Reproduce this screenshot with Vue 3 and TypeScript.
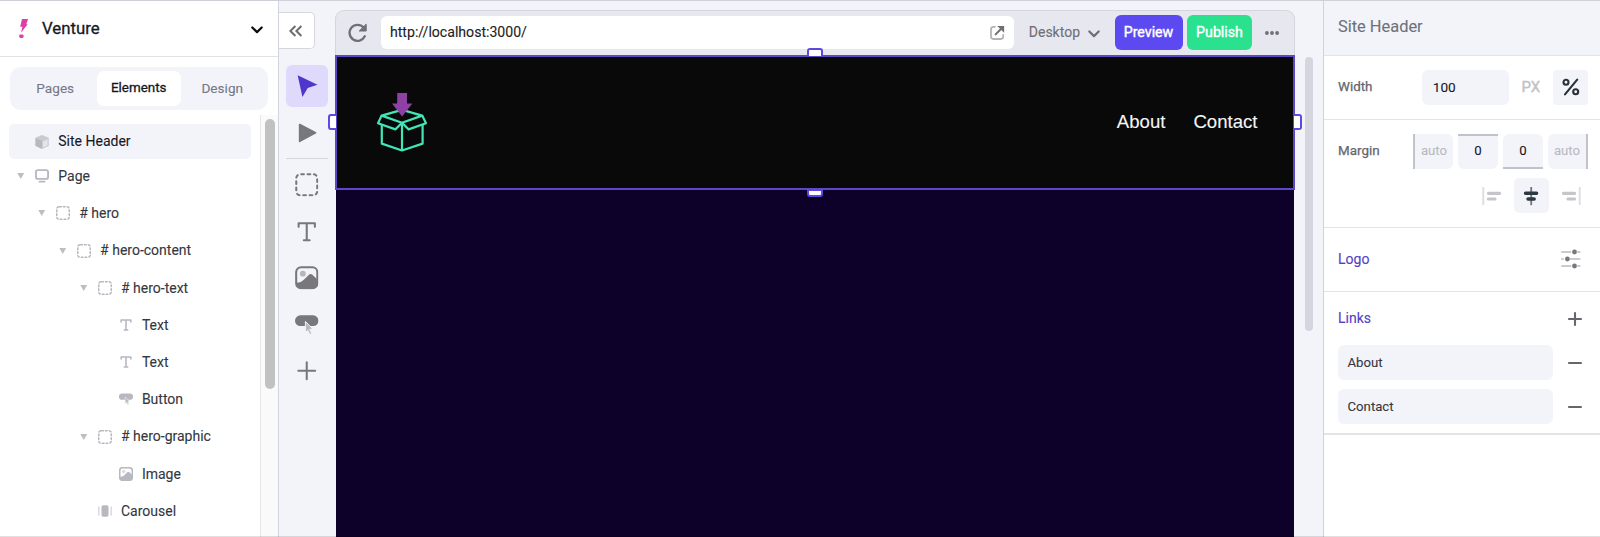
<script setup lang="ts">
import { ref } from 'vue'

interface TreeNode {
  label: string
  icon: string
  depth: number
  open?: boolean
}

const tabs = ['Pages', 'Elements', 'Design']
const activeTab = ref('Elements')

const nodes: TreeNode[] = [
  { label: '# hero', icon: 'box', depth: 1, open: true },
  { label: '# hero-content', icon: 'box', depth: 2, open: true },
  { label: '# hero-text', icon: 'box', depth: 3, open: true },
  { label: 'Text', icon: 'text', depth: 4 },
  { label: 'Text', icon: 'text', depth: 4 },
  { label: 'Button', icon: 'button', depth: 4 },
  { label: '# hero-graphic', icon: 'box', depth: 3, open: true },
  { label: 'Image', icon: 'image', depth: 4 },
  { label: 'Carousel', icon: 'carousel', depth: 3 },
]

const insertTools = ['box', 'text', 'image', 'button', 'plus']

const margins = [
  { side: 'left', value: 'auto' },
  { side: 'top', value: '0' },
  { side: 'bottom', value: '0' },
  { side: 'right', value: 'auto' },
]

const links = ref(['About', 'Contact'])
</script>

<template>
  <div class="app">
    <svg class="defs" aria-hidden="true">
      <symbol id="i-box" viewBox="0 0 24 24">
        <rect class="line" x="1.3" y="1.3" width="21.4" height="21.4" rx="4" fill="none" stroke="currentColor" stroke-linecap="round" stroke-dasharray="2.6 3.6" stroke-dashoffset="-1" pathLength="74.4" />
      </symbol>
      <symbol id="i-text" viewBox="0 0 24 24">
        <path class="line" d="M3.7 7V3.4H20.3V7M12 3.4V20.6M9 20.6H15" fill="none" stroke="currentColor" stroke-linecap="round" stroke-linejoin="round" />
      </symbol>
      <symbol id="i-image" viewBox="0 0 24 24">
        <rect class="line" x="1.2" y="1.2" width="21.6" height="21.6" rx="5" fill="none" stroke="currentColor" />
        <circle cx="8" cy="7.8" r="3" fill="currentColor" opacity=".5" />
        <path d="M1.2 16.8C4 17 6.5 16.5 9 14L14.2 8.9Q16 7.6 17.8 8.9L22.8 13.8V18Q22.8 22.8 18 22.8H6Q1.2 22.8 1.2 18Z" fill="currentColor" />
      </symbol>
      <symbol id="i-button" viewBox="0 0 24 24">
        <rect x="0" y="2.4" width="24" height="11" rx="5.4" fill="currentColor" />
        <path class="pointer" d="M10.6 8.6L18.4 16.3L15.1 16.7L17.1 21L15.1 22L13.1 17.8L10.6 20Z" stroke-width="1" />
      </symbol>
      <symbol id="i-plus" viewBox="0 0 24 24">
        <path class="line" d="M12 3.4V20.6M3.4 12H20.6" fill="none" stroke="currentColor" stroke-linecap="round" />
      </symbol>
      <symbol id="i-carousel" viewBox="0 0 24 24">
        <rect x="6" y="2" width="12" height="20" rx="3" fill="currentColor" />
        <path d="M1.4 5V19M22.6 5V19" stroke="currentColor" stroke-width="2.4" stroke-linecap="round" opacity=".55" />
      </symbol>
      <symbol id="i-page" viewBox="0 0 24 24">
        <rect x="1.6" y="2" width="20.8" height="15" rx="3.4" fill="none" stroke="currentColor" stroke-width="3.2" />
        <path d="M7.6 21.8H16.4" stroke="currentColor" stroke-width="3" stroke-linecap="round" />
      </symbol>
      <symbol id="i-cube" viewBox="0 0 24 24">
        <path d="M12 .5L23 5V18.4L12 23.5L1 18.4V5Z" fill="currentColor" stroke="currentColor" stroke-linejoin="round" opacity=".7" />
        <path d="M1.3 5.4L12 10V23.5L1 18.4Z" fill="currentColor" />
        <path d="M13.4 11L21.6 7.4V17.6L13.4 21.4Z" fill="#f3f4fa" opacity=".65" />
      </symbol>
    </svg>

    <aside class="sidebar">
      <header class="project">
        <svg class="bolt" viewBox="0 0 9 20">
          <path d="M3 0H9L7.3 5.2H8.7L2 13.7L3.5 7.8H1.2Z" fill="#dd3fa4" />
          <rect x=".2" y="15.4" width="4.4" height="3.6" rx="1.4" fill="#dd3fa4" />
        </svg>
        <span class="project-name">Venture</span>
        <svg class="project-caret" viewBox="0 0 12 8"><path d="M1.3 1.5L6 6.1L10.7 1.5" /></svg>
      </header>

      <nav class="tabs">
        <button v-for="t in tabs" :key="t" class="tab" :class="{ on: t === activeTab }" @click="activeTab = t">{{ t }}</button>
      </nav>

      <div class="tree-area">
        <div class="tree">
          <div class="root"><svg class="node-icon"><use href="#i-cube" /></svg><span>Site Header</span></div>
          <div class="node page">
            <svg class="tri" viewBox="0 0 8 7"><path d="M0 0H8L4 7Z" /></svg>
            <svg class="node-icon"><use href="#i-page" /></svg><span>Page</span>
          </div>
          <div v-for="(n, i) in nodes" :key="i" class="node" :class="'d' + n.depth">
            <svg class="tri" :class="{ none: !n.open }" viewBox="0 0 8 7"><path d="M0 0H8L4 7Z" /></svg>
            <svg class="node-icon"><use :href="'#i-' + n.icon" /></svg><span>{{ n.label }}</span>
          </div>
        </div>
        <div class="track"><div class="thumb"></div></div>
      </div>
    </aside>

    <div class="toolbar">
      <button class="collapse">
        <svg viewBox="0 0 14 12"><path d="M6.4 1L1.4 6L6.4 11M12.4 1L7.4 6L12.4 11" /></svg>
      </button>
      <div class="tools">
        <button class="tool active">
          <svg class="tool-icon" viewBox="0 0 24 24"><path d="M2.7 1.2L23 11L13 14.2L7.6 23.4Z" fill="currentColor" /></svg>
        </button>
        <button class="tool">
          <svg class="tool-icon" viewBox="0 0 24 24"><path d="M4.8 3.7L20.9 12L4.8 20.7Z" fill="currentColor" stroke="currentColor" stroke-width="1.8" stroke-linejoin="round" /></svg>
        </button>
        <div class="divider"></div>
        <button v-for="t in insertTools" :key="t" class="tool">
          <svg class="tool-icon"><use :href="'#i-' + t" /></svg>
        </button>
      </div>
    </div>

    <main class="canvas">
      <div class="browser">
        <div class="chrome">
          <svg class="reload" viewBox="0 0 20 20">
            <path d="M16.8 13.3A8 8 0 1 1 15.6 4.6" fill="none" stroke="currentColor" stroke-width="2.3" stroke-linecap="round" />
            <path d="M18.2 1.2V8H11.2Z" fill="currentColor" stroke="currentColor" stroke-linejoin="round" />
          </svg>
          <div class="url">
            <span>http://localhost:3000/</span>
            <svg class="open" viewBox="0 0 15 15">
              <path d="M5 1.8H3.4Q1 1.8 1 4.2V11.6Q1 14 3.4 14H10.8Q13.2 14 13.2 11.6V10" fill="none" stroke="#b4b4b8" stroke-width="1.8" stroke-linecap="round" />
              <path d="M5.6 9.4L12 3" stroke="#6f6f74" stroke-width="2" stroke-linecap="round" />
              <path d="M7.2 .9H14.1V7.8Z" fill="#6f6f74" />
            </svg>
          </div>
          <span class="device">Desktop</span>
          <svg class="device-caret" viewBox="0 0 12 8"><path d="M1.3 1.5L6 6.1L10.7 1.5" /></svg>
          <button class="action preview">Preview</button>
          <button class="action publish">Publish</button>
          <svg class="more" viewBox="0 0 14 4"><circle cx="1.9" cy="2" r="1.9" /><circle cx="7" cy="2" r="1.9" /><circle cx="12.1" cy="2" r="1.9" /></svg>
        </div>
        <div class="site">
          <div class="site-header">
            <svg class="logo" viewBox="0 0 50 59">
              <g fill="none" stroke="#42e6b5" stroke-width="2.2" stroke-linejoin="round">
                <path d="M4.8 32V50.6L25 57.5L45.6 50.6V32" />
                <path d="M25 29.8V57.5" />
                <path d="M4.6 22.6L25 16.9L45.2 22.6L25 29.8Z" />
                <path d="M4.6 22.6L1 30.2L18.4 36.4L25 29.8L31.6 36.4L49 30.2L45.2 22.6" />
              </g>
              <path d="M20.2 0H30V10.4H35.4L25.1 23.6L15 10.4H20.2Z" fill="#8e40a5" />
            </svg>
            <div class="site-nav"><a>About</a><a>Contact</a></div>
            <i class="handle h-top"></i><i class="handle h-bottom"></i>
            <i class="handle h-left"></i><i class="handle h-right"></i>
          </div>
        </div>
      </div>
      <div class="canvas-thumb"></div>
    </main>

    <aside class="inspector">
      <header class="title">Site Header</header>
      <section class="width-section">
        <label>Width</label>
        <div class="field width-field">100</div>
        <span class="unit">PX</span>
        <div class="percent">
          <svg viewBox="0 0 18 18"><g fill="none" stroke="#263238" stroke-width="2.1"><circle cx="4" cy="4.2" r="2.5" /><circle cx="13.7" cy="13.8" r="2.5" /><path d="M15.2 1.6L3 16.4" stroke-linecap="round" /></g></svg>
        </div>
      </section>
      <section class="margin-section">
        <div class="margin-row">
          <label>Margin</label>
          <div v-for="m in margins" :key="m.side" class="margin" :class="[m.side, { muted: m.value === 'auto' }]">{{ m.value }}</div>
        </div>
        <div class="align-row">
          <div class="align"><svg viewBox="0 0 20 20"><path d="M1.3 1V19" stroke="#dfdfe3" stroke-width="2" /><path d="M6.4 7.3H17.6M6.4 13H13" stroke="#c6c6ca" stroke-width="3.2" stroke-linecap="round" /></svg></div>
          <div class="align on"><svg viewBox="0 0 20 20"><path d="M10.2 1V19.2" stroke="#6b757d" stroke-width="1.8" /><path d="M4.5 7.3H15.6M7 13H13.2" stroke="#2d3941" stroke-width="3.4" stroke-linecap="round" /></svg></div>
          <div class="align"><svg viewBox="0 0 20 20"><path d="M18.7 1V19" stroke="#dfdfe3" stroke-width="2" /><path d="M2.4 7.3H13.6M7 13H13.6" stroke="#c6c6ca" stroke-width="3.2" stroke-linecap="round" /></svg></div>
        </div>
      </section>
      <section class="logo-section">
        <span class="accent">Logo</span>
        <svg class="sliders" viewBox="0 0 20 20">
          <path d="M1 3H9.6M17 3H18.6M1 10H2M9.4 10H18.6M1 17H9.6M17 17H18.6" stroke="#cbcbcf" stroke-width="2" stroke-linecap="round" />
          <g fill="#77777d"><circle cx="13.5" cy="3" r="2.4" /><circle cx="6.4" cy="10" r="2.4" /><circle cx="13.5" cy="17" r="2.4" /></g>
        </svg>
      </section>
      <section class="links-section">
        <div class="links-head">
          <span class="accent">Links</span>
          <svg class="sign" viewBox="0 0 14 14"><path d="M7 1V13M1 7H13" /></svg>
        </div>
        <div v-for="l in links" :key="l" class="link-row">
          <div class="field">{{ l }}</div>
          <svg class="sign" viewBox="0 0 14 14"><path d="M1 7H13" /></svg>
        </div>
      </section>
    </aside>
  </div>
</template>

<style>
body { margin: 0; overflow: hidden; }
</style>

<style scoped>
.app {
  position: relative; display: flex; box-sizing: border-box; width: 1600px; height: 537px; overflow: hidden;
  border-top: 1px solid #cfcfd7;
  background: #f3f4fa; color: #343740;
  font: 14px/20px Roboto, "Liberation Sans", sans-serif;
  -webkit-text-stroke: .1px currentColor;
}
.app::after { content: ""; position: absolute; left: 0; right: 0; bottom: 0; height: 1px; background: rgba(0, 0, 0, .12); }
.app * { box-sizing: border-box; }
.app svg { display: block; flex: none; overflow: visible; }
.app .defs { position: absolute; width: 0; height: 0; }
button { border: 0; padding: 0; margin: 0; font: inherit; color: inherit; background: none; }

.sidebar { flex: none; width: 279px; display: flex; flex-direction: column; background: #fff; border-right: 1px solid #d3d3dd; }
.project { height: 56px; flex: none; display: flex; align-items: center; padding: 0 15px 0 19px; border-bottom: 1px solid #e2e2e6; }
.bolt { width: 9px; height: 20px; margin-top: 1px; }
.project-name { margin: -2px 0 0 14px; font-size: 16.8px; color: #17191f; flex: 1; -webkit-text-stroke-width: .3px; }
.project-caret { width: 12px; height: 8px; margin-top: 3px; }
.project-caret path { fill: none; stroke: #0c0c0e; stroke-width: 2.2; stroke-linecap: round; stroke-linejoin: round; }
.tabs { flex: none; display: flex; margin: 9.5px 10px 0 9.5px; height: 43.5px; padding: 4.3px 4px; border-radius: 11px; background: #f3f4fa; }
.tab { flex: 1; border-radius: 7px; font-size: 13.6px; color: #757887; padding-bottom: 1px; }
.tab.on { background: #fff; color: #14161c; font-size: 13.4px; -webkit-text-stroke-width: .3px; }
.tree-area { flex: 1; display: flex; min-height: 0; margin-top: 5px; }
.tree { flex: 1; padding: 9.4px 9.5px 0 9px; overflow: hidden; }
.root { display: flex; align-items: center; height: 34.5px; border-radius: 5px; background: #f3f4fa; padding-left: 26px; color: #17191f; }
.root .node-icon + span { padding-bottom: 1.5px; }
.node-icon { width: 14px; height: 14px; color: #b7b8c0; --line: 2.7; }
.node-icon + span { margin-left: 9.3px; padding-bottom: .6px; }
.node { display: flex; align-items: center; height: 37.2px; white-space: nowrap; }
.node.page { height: 35px; margin-bottom: 1px; padding-left: 8px; }
.d1 { padding-left: 28.9px; }
.d2 { padding-left: 49.8px; }
.d3 { padding-left: 70.7px; }
.d4 { padding-left: 91.6px; }
.tri { width: 7.5px; height: 6px; margin-right: 10.5px; fill: #bdbdc2; }
.tri.none { visibility: hidden; }
.track { flex: none; width: 18px; background: #fafafa; border-left: 1px solid #e6e6e8; padding: 4px 3px 0 4px; }
.thumb { width: 9.5px; height: 270px; border-radius: 5px; background: #c1c1c1; }
.line { stroke-width: var(--line, 2.1); }
.pointer { fill: #b9b9be; stroke: #f3f4fa; }

.toolbar { flex: none; width: 56px; }
.collapse { display: flex; align-items: center; justify-content: center; width: 36px; height: 37px; margin-top: 11px; padding: 0 2px 0 0; background: #fff; border: 1px solid #d6d6dc; border-left: 0; border-radius: 0 5px 5px 0; }
.collapse svg { width: 14px; height: 12px; }
.collapse path { fill: none; stroke: #6d6d72; stroke-width: 2; }
.tools { display: flex; flex-direction: column; gap: 4.6px; width: 42px; margin: 16px 0 0 7px; }
.tool { display: flex; align-items: center; justify-content: center; width: 42px; height: 42px; border-radius: 6px; color: #77777c; }
.tool.active { background: #dfdafc; color: #4e37cb; }
.tool-icon { width: 23.5px; height: 23.5px; }
.divider { height: 1px; background: #d6d6dc; }

.canvas { flex: 1; display: flex; align-items: flex-start; }
.browser { width: 960px; height: 527px; margin-top: 9px; }
.chrome { display: flex; align-items: center; height: 45px; padding: 0 15px 2px 12px; background: #e7e7f0; border: 1px solid #d5d5dc; border-bottom: 0; border-radius: 9px 9px 0 0; color: #6f6f75; }
.reload { width: 20px; height: 20px; margin-top: 2px; }
.url { display: flex; align-items: center; justify-content: space-between; width: 633px; height: 33px; margin-left: 13px; padding: 0 9px; background: #fff; border-radius: 6px; color: #1b1d22; }
.url span { font-size: 14.1px; padding-bottom: 1px; }
.open { width: 15px; height: 15px; }
.device { margin-left: 15px; padding-bottom: 1px; }
.device-caret { width: 12px; height: 8px; margin: 3px 14.5px 0 8px; }
.device-caret path { fill: none; stroke: #6f6f75; stroke-width: 2.2; stroke-linecap: round; stroke-linejoin: round; }
.action { height: 35px; border-radius: 6px; color: #fff; font-size: 14.2px; flex: none; padding-bottom: 1px; -webkit-text-stroke-width: .4px; }
.preview { width: 68px; background: #5d49f0; }
.publish { width: 65px; margin-left: 4.5px; background: #2ae18e; }
.more { width: 14px; height: 4px; margin-left: 13px; margin-top: 1px; fill: #6f6f75; }
.site { height: 482px; margin: 0 1px; background: #0d0129; }
.site-header { position: relative; display: flex; align-items: center; justify-content: space-between; height: 134.5px; margin: 0 -1px; padding: 0 35.5px 0 40px; background: #090909; border: 2px solid #5c48c6; }
.logo { width: 50px; height: 59px; }
.site-nav { display: flex; gap: 28px; padding-bottom: .6px; color: #f5f5f5; font: 18.6px/24px "Liberation Sans", Arial, sans-serif; }
.handle { position: absolute; background: #fff; border: 2px solid #5d49dd; }
.h-top, .h-bottom { width: 16px; height: 8px; left: 470px; }
.h-top { top: -9px; border-bottom: 0; border-radius: 3px 3px 0 0; }
.h-bottom { bottom: -9px; border-radius: 0 0 3px 3px; }
.h-left, .h-right { width: 8px; height: 16px; top: 57px; }
.h-left { left: -9px; border-right: 0; border-radius: 3px 0 0 3px; }
.h-right { right: -9px; border-left: 0; border-radius: 0 3px 3px 0; }
.canvas-thumb { width: 8px; height: 274px; margin: 56px 0 0 9.5px; border-radius: 4px; background: #d5d5e0; }

.inspector { flex: none; width: 277px; background: #fff; border-left: 1px solid #d0d1db; }
.title { height: 55px; padding: 16px 14px; background: #f3f4fa; border-bottom: 1px solid #e2e2e7; color: #6d727a; font-size: 16.4px; }
section { border-bottom: 1px solid #e4e4e8; padding: 0 12px 0 14px; }
label { color: #63666e; font-size: 13.4px; padding-bottom: 1px; -webkit-text-stroke-width: .25px; }
.field { display: flex; align-items: center; height: 35px; border-radius: 6px; background: #f3f4fa; padding: 0 0 0 9.5px; font-size: 13.2px; }
.width-section { display: flex; align-items: center; height: 64px; padding-bottom: 1px; }
.width-section label { width: 84px; }
.width-field { width: 87px; padding: 0 0 1px 11px; color: #17191f; font-size: 13.6px; }
.unit { width: 44.5px; text-align: center; color: #c1c1c6; font-size: 15px; -webkit-text-stroke-width: .4px; }
.percent { display: flex; align-items: center; justify-content: center; width: 35px; height: 35px; border-radius: 4px; background: #f3f4fa; }
.percent svg { width: 18px; height: 18px; }
.margin-section { height: 108px; padding-top: 14px; }
.margin-row { display: flex; align-items: center; gap: 5px; }
.margin-row label { flex: 1; padding-bottom: 2px; }
.margin { display: flex; align-items: center; justify-content: center; width: 40px; height: 35px; border-radius: 6px; background: #f3f4fa; color: #17191f; font-size: 13.2px; padding-bottom: 1.5px; }
.muted { color: #b9bac1; }
.left { border-left: 2px solid #c1c2ca; border-radius: 0 6px 6px 0; }
.right { border-right: 2px solid #c1c2ca; border-radius: 6px 0 0 6px; }
.top { border-top: 2px solid #c1c2ca; border-radius: 0 0 6px 6px; padding-bottom: 3.5px; }
.bottom { border-bottom: 2px solid #c1c2ca; border-radius: 6px 6px 0 0; padding-bottom: 0; }
.align-row { display: flex; justify-content: flex-end; gap: 4.5px; margin-top: 9px; }
.align { display: flex; align-items: center; justify-content: center; width: 35px; height: 35px; border-radius: 5px; }
.align.on { background: #f3f4fa; }
.align svg { width: 20px; height: 20px; }
.accent { color: #5340c4; padding-bottom: 2px; }
.logo-section { display: flex; align-items: center; justify-content: space-between; height: 64px; padding-right: 19.5px; }
.sliders { width: 20px; height: 20px; margin-bottom: 1px; }
.links-section { height: 143px; border-bottom-width: 2px; padding-right: 18px; }
.links-head { display: flex; align-items: center; justify-content: space-between; height: 53px; }
.link-row { display: flex; align-items: center; justify-content: space-between; margin-bottom: 9px; }
.link-row .field { width: 214.5px; }
.sign { width: 14px; height: 14px; }
.sign path { fill: none; stroke: #66666c; stroke-width: 2.1; stroke-linecap: round; }
</style>
